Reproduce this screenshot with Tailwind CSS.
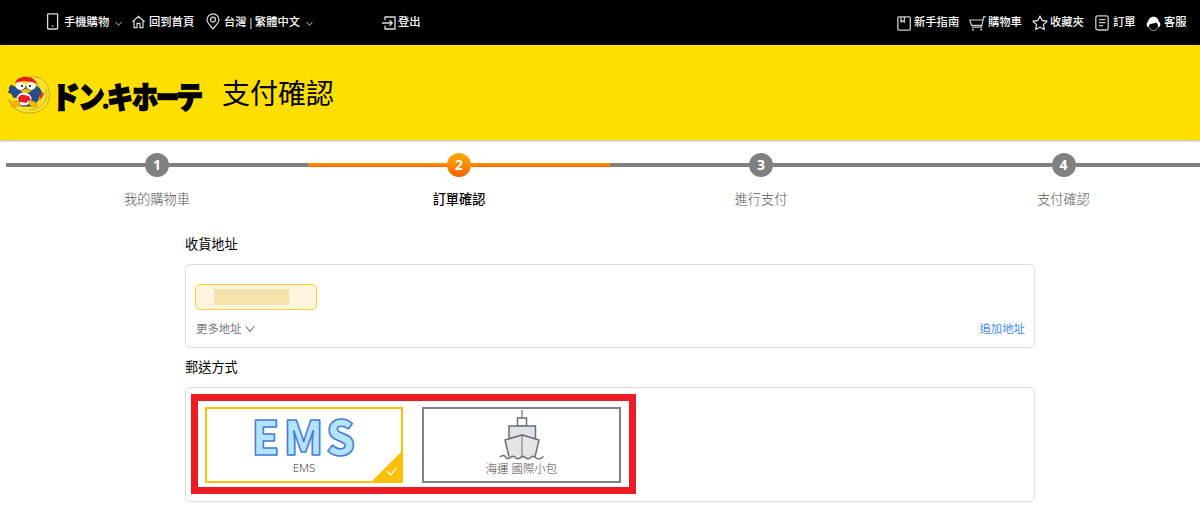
<!DOCTYPE html>
<html lang="zh-Hant">
<head>
    <meta charset="UTF-8">
    <meta name="viewport" content="width=device-width, initial-scale=1.0">
    <title>支付確認</title>
    <script src="https://cdn.jsdelivr.net/npm/@tailwindcss/browser@4"></script>
</head>
<body class="h-[513px] overflow-hidden bg-white font-['Open_Sans','Noto_Sans_CJK_TC',sans-serif] text-black">
    <!-- Top bar -->
    <nav class="flex h-[45px] items-center bg-black pb-[2px] pr-[13px] pl-[46px] text-[11.3px] leading-4 font-medium whitespace-nowrap text-white">
        <a class="flex items-center">
            <svg class="mr-[5px] h-[17px] w-[13px]" viewBox="0 0 13 17" fill="none" stroke="#ddd" stroke-width="1.3"><rect x="1.6" y=".8" width="10" height="15.2" rx=".8"/><path d="M6 13h1.3"/></svg>
            <span class="w-[45px]">手機購物</span>
            <svg class="mt-1 ml-[6px] h-[6px] w-[7px]" viewBox="0 0 7 6" fill="none" stroke="#bbb"><path d="M.6 1 3.5 4.4 6.4 1"/></svg>
        </a>
        <a class="ml-[10px] flex items-center">
            <svg class="mr-[4px] h-[14px] w-[13px]" viewBox="0 0 13 14" fill="none" stroke="#ddd" stroke-width="1.2"><path d="M.5 6.8 6.5 1.2l6 5.6M2 6v6.7h3V8.3h3v4.4h3V6"/></svg>
            <span class="w-[45px]">回到首頁</span>
        </a>
        <a class="ml-[12px] flex items-center">
            <svg class="mr-[4px] h-[17px] w-[14px]" viewBox="0 0 14 17" fill="none" stroke="#ddd" stroke-width="1.2"><path d="M7 15.8C3.6 12 1 9.5 1 6.8a6 6 0 0 1 12 0C13 9.5 10.4 12 7 15.8Z"/><circle cx="7" cy="6.6" r="2.5"/></svg>
            <span class="w-[77px] [word-spacing:-1.9px]">台灣 | 繁體中文</span>
            <svg class="mt-1 ml-[5px] h-[6px] w-[7px]" viewBox="0 0 7 6" fill="none" stroke="#bbb"><path d="M.6 1 3.5 4.4 6.4 1"/></svg>
        </a>
        <a class="ml-[69px] flex items-center">
            <svg class="mt-[3px] mr-[2px] h-[14px] w-[14px]" viewBox="0 0 14 14" fill="none" stroke="#ddd" stroke-width="1.3"><path d="M3 4.3V1h10v12H3V9.7M0 7h10M7.5 4.3 10.2 7 7.5 9.7"/></svg>
            <span>登出</span>
        </a>
        <div class="ml-auto flex items-center">
            <svg class="mt-[3px] mr-[3px] h-[15px] w-[14px]" viewBox="0 0 14 15" fill="none" stroke="#d0c9c5" stroke-width="1.3"><rect x=".8" y=".8" width="12.5" height="13.4" rx="1"/><path d="M4 1v5l1.7-1.2L7.4 6V1"/></svg>
            <span class="w-[46px]">新手指南</span>
            <svg class="mt-[3px] mr-[2px] ml-[9px] h-[15px] w-[17px]" viewBox="0 0 17 15" fill="none" stroke="#d0c9c5" stroke-width="1.2"><path d="M17 .8h-2.3L12.5 11.2H2.8M14 4H.8l1.7 5.3h10.3"/><path d="M3 13.7h1.8M11.3 13.7h1.8" stroke-width="1.8"/></svg>
            <span class="w-[34px]">購物車</span>
            <svg class="mt-[3px] mr-[2px] ml-[10px] h-[16px] w-[16px]" viewBox="0 0 16 16" fill="none" stroke="#ddd" stroke-width="1.3" stroke-linejoin="round"><path d="m8 1 2.1 4.5 4.9.7-3.6 3.4.9 4.9L8 12.2l-4.3 2.3.9-4.9L1 6.2l4.9-.7Z"/></svg>
            <span class="w-[34px]">收藏夾</span>
            <svg class="mt-[3px] mr-[4px] ml-[11px] h-[16px] w-[14px]" viewBox="0 0 14 16" fill="none" stroke="#d0c9c5" stroke-width="1.3"><rect x=".8" y=".8" width="12.4" height="14.2" rx="2"/><path d="M4 4.7h6.5M4 7.6h6.5M4 10.6h4"/></svg>
            <span class="w-[23px]">訂單</span>
            <svg class="mt-[4px] mr-[3px] ml-[10px] h-[16px] w-[15px]" viewBox="0 0 15 16"><path fill="#fff" d="M7.5.8c3 0 5 2.2 5.3 4.8 1.3.8 1.7 2 1.5 3.4-.2 1.6-1.3 2.4-2.4 2.5.4-2-.3-4-1.7-5C8 8 5 7.3 3.5 8.6c-.6.7-.7 1.9-.4 2.9C1.6 11.2.7 10.3.6 8.8c0-1.4.5-2.5 1.6-3.2C2.5 3 4.5.8 7.5.8Z"/><path fill="none" stroke="#aaa" d="M3.3 11.5c1.8 4.2 6.7 4.2 8.5 0"/></svg>
            <span class="w-[23px]">客服</span>
        </div>
    </nav>

    <!-- Brand header -->
    <header class="relative flex h-[95px] items-start bg-[#ffdf00] pl-[7px] shadow-[0_1px_2px_#b5b0a0]">
        <svg class="mt-[29px] h-[42px] w-[197px] overflow-visible" viewBox="0 0 197 42">
            <!-- moon -->
            <path d="M23 3C37 1 43 12 42.5 22 42 33 32 40 21 39 11 38.5 4 33 1.5 25.5 9 33 24 36 31 27 36 18 32 8 23 3Z" fill="#fbe32b" stroke="#a59731" stroke-width=".7"/>
            <path d="M39 15c3 13-6 21-17 21" fill="none" stroke="#d7bd18" stroke-width="1.3"/>
            <!-- penguin -->
            <path d="M10 14 4 11 2 14l1 2-2 2 4 2 1 3 4 1 1 5 4 3h11l5-6 1-4 3-3-2-4-5-4Z" fill="#254c90" stroke="#203451" stroke-width=".6"/>
            <path d="M8 9C10 1 27 0 30 10c-6-3-15-4-22-1Z" fill="#e51f26"/>
            <ellipse cx="13.5" cy="12" rx="4.8" ry="4" fill="#fff"/><ellipse cx="24" cy="12" rx="4.8" ry="4" fill="#fff"/>
            <circle cx="15" cy="12" r="1"/><circle cx="23" cy="12" r="1"/>
            <path d="m13 17 6-2.5 6 2.5-4 2h-5Z" fill="#f6c500" stroke="#806300" stroke-width=".5"/>
            <ellipse cx="17" cy="25" rx="7.5" ry="6.5" fill="#fff"/>
            <path d="M11 24c1-3 4-4 6-3l5 1 2 4-3 1-2 2-5-1-2 1Z" fill="#e51f26"/>
            <ellipse cx="8.5" cy="30" rx="4.5" ry="2.8" fill="#f6b900" stroke="#a57b00" stroke-width=".4" transform="rotate(-25 8.5 30)"/>
            <ellipse cx="26" cy="30" rx="4.5" ry="2.8" fill="#f6b900" stroke="#a57b00" stroke-width=".4" transform="rotate(25 26 30)"/>
            <path d="m31 15-2 3 4 3-2 3 3 2" fill="none" stroke="#776500" stroke-width=".6"/>
            <path d="m38 18-6 4 2 3Z" fill="#e51f26"/>
            <!-- wordmark -->
            <g class="font-['Noto_Sans_CJK_JP',sans-serif] font-black" font-size="30" stroke="#000" stroke-width="1.6" stroke-linejoin="miter">
                <text x="44.5" y="34" textLength="28" lengthAdjust="spacingAndGlyphs">ド</text>
                <text x="71.5" y="34" textLength="26" lengthAdjust="spacingAndGlyphs">ン</text>
                <rect x="97" y="30.5" width="3.5" height="3.5" rx="1"/>
                <text x="100" y="34" textLength="26" lengthAdjust="spacingAndGlyphs">キ</text>
                <text x="125" y="34" textLength="26" lengthAdjust="spacingAndGlyphs">ホ</text>
                <text x="149" y="34" textLength="23" lengthAdjust="spacingAndGlyphs">ー</text>
                <text x="169.5" y="34" textLength="26.5" lengthAdjust="spacingAndGlyphs">テ</text>
            </g>
        </svg>
        <h1 class="mt-[27px] ml-[18px] text-[28px] leading-[42px]">支付確認</h1>
    </header>

    <!-- Checkout steps -->
    <ol class="mt-[13px] ml-[6px] flex w-[1209px] text-center text-[13.2px] leading-5 text-[#555]">
        <li class="w-[302px] shrink-0">
            <div class="flex h-6 items-center">
                <div class="h-1 flex-1 bg-[#808080]"></div>
                <div class="h-6 w-6 rounded-full bg-[#808080] text-sm leading-6 font-bold text-white">1</div>
                <div class="h-1 flex-1 bg-[#808080]"></div>
            </div>
            <p class="mt-3 font-light">我的購物車</p>
        </li>
        <li class="w-[302px] shrink-0">
            <div class="flex h-6 items-center">
                <div class="h-1 flex-1 bg-linear-to-b from-[#ff9d00] to-[#ff6500]"></div>
                <div class="h-6 w-6 rounded-full bg-linear-to-b from-[#ffae00] to-[#ff5d00] text-sm leading-6 font-bold text-white">2</div>
                <div class="h-1 flex-1 bg-linear-to-b from-[#ff9d00] to-[#ff6500]"></div>
            </div>
            <p class="mt-3 font-medium text-black">訂單確認</p>
        </li>
        <li class="w-[302px] shrink-0">
            <div class="flex h-6 items-center">
                <div class="h-1 flex-1 bg-[#808080]"></div>
                <div class="h-6 w-6 rounded-full bg-[#808080] text-sm leading-6 font-bold text-white">3</div>
                <div class="h-1 flex-1 bg-[#808080]"></div>
            </div>
            <p class="mt-3 font-light">進行支付</p>
        </li>
        <li class="w-[303px] shrink-0">
            <div class="flex h-6 items-center">
                <div class="h-1 flex-1 bg-[#808080]"></div>
                <div class="h-6 w-6 rounded-full bg-[#808080] text-sm leading-6 font-bold text-white">4</div>
                <div class="h-1 flex-1 bg-[#808080]"></div>
            </div>
            <p class="mt-3 font-light">支付確認</p>
        </li>
    </ol>

    <main class="mt-[25px] ml-[185px] w-[850px]">
        <!-- Delivery address -->
        <h2 class="text-[13.2px] leading-5">收貨地址</h2>
        <section class="mt-[10px] h-[84px] rounded-[5px] border border-[#dedede] px-[9px] pt-[19px]">
            <div class="h-[26px] w-[122px] rounded-[5px] border border-[#ffcd38] bg-[#fff5df] pt-[4px] pl-[18px]">
                <div class="h-4 w-[75px] bg-[#f3e2a9]"></div>
            </div>
            <div class="mt-[10px] flex justify-between pl-[1px] text-[11.4px] leading-[18px] text-[#777]">
                <span class="flex items-center">更多地址
                    <svg class="ml-[3px] h-[8px] w-[10px]" viewBox="0 0 10 8" fill="none" stroke="#777" stroke-width="1.1"><path d="m.7 1 4.3 5.5L9.3 1"/></svg>
                </span>
                <a class="text-[#3c8cef]">追加地址</a>
            </div>
        </section>

        <!-- Shipping method -->
        <h2 class="mt-[9px] text-[13.2px] leading-5">郵送方式</h2>
        <section class="mt-[10px] h-[115px] rounded-[5px] border border-[#dedede] pt-[6px] pl-[5px]">
            <div class="flex h-[100px] w-[445px] gap-[19px] border-[7px] border-[#ed1c24] pt-[6px] pl-[7px]">
                <div class="relative flex h-[76px] w-[198px] flex-col items-center border-2 border-[#ffc107]">
                    <svg class="mt-[8px] h-[42px] w-[104px] overflow-visible" viewBox="0 0 104 42">
                        <g class="font-['Noto_Sans_CJK_JP',sans-serif] font-black" font-size="47" fill="#b2e5fc" stroke="#497bd6" stroke-width="1.6" stroke-linejoin="round">
                            <text x="-.5" y="37.5" textLength="28" lengthAdjust="spacingAndGlyphs">E</text>
                            <text x="31.5" y="37.5" textLength="40" lengthAdjust="spacingAndGlyphs">M</text>
                            <text x="74" y="37.5" textLength="29" lengthAdjust="spacingAndGlyphs">S</text>
                        </g>
                    </svg>
                    <span class="mt-px text-[11.6px] leading-4 font-light text-[#333]">EMS</span>
                    <svg class="absolute right-0 bottom-0 h-[29px] w-[29px]" viewBox="0 0 29 29"><path d="M29 0v29H0Z" fill="#ffc107"/><path d="m15 19 3.7 4 6-7.5" fill="none" stroke="#fff" stroke-width="1.2"/></svg>
                </div>
                <div class="flex h-[76px] w-[199px] flex-col items-center border-2 border-[#828282]">
                    <svg class="mt-[1px] h-[51px] w-[46px]" viewBox="0 0 46 51" fill="none" stroke="#6f6f6f" stroke-width="1.5">
                        <path d="M23 0v8" stroke-width="1.2"/>
                        <path d="M18.5 8h9v8h-9Z" fill="#fff"/>
                        <path d="M10 16h26.5v13L23 25 10 29Z" fill="#e0e3ea"/>
                        <path d="m6 30 17-5 17 5-4 17c-3 3-5-1-8 1-2 1-3 1-5 1s-3 0-5-1c-3-2-5 2-8-1Z" fill="#e5e5e5" stroke="none"/>
                        <path d="M10 47 6 30l17-5 17 5-4 17"/>
                        <path d="M23 25v23" stroke-width="1"/>
                        <path d="M1 47c3-3 5-1 6 .5s3 1.5 4.5 0 3-2 5 0 3.5 1.5 5 0 3-2 5 0 3.5 1.5 5 0 3-2 5 0 5 2 8-1"/>
                    </svg>
                    <span class="text-[11.4px] leading-4 font-light whitespace-nowrap text-[#444]">海運 國際小包</span>
                </div>
            </div>
        </section>
    </main>
</body>
</html>
